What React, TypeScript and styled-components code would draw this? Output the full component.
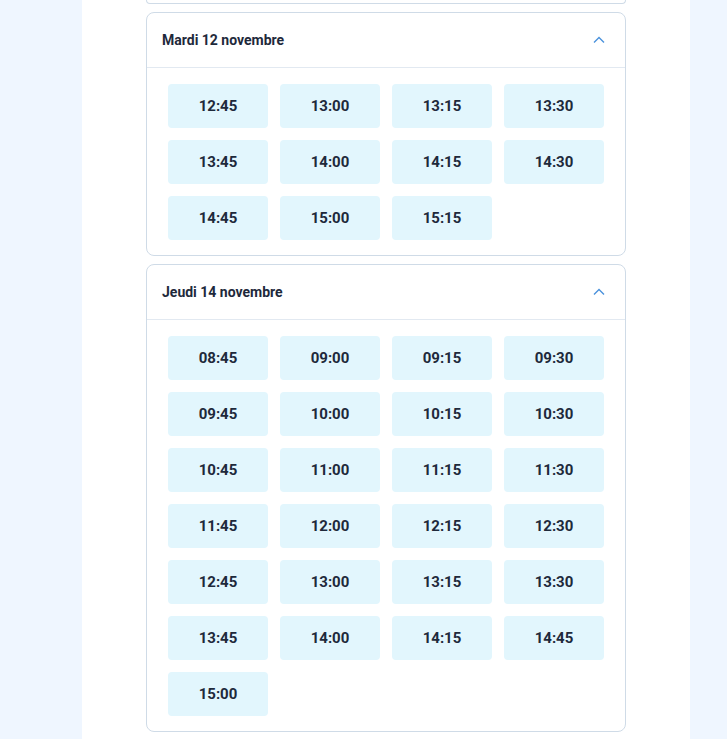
import React from "react";
import styled, { createGlobalStyle } from "styled-components";

const GlobalStyle = createGlobalStyle`
  html, body {
    margin: 0;
    padding: 0;
    background: #eff6ff;
    font-family: Roboto, "Liberation Sans", sans-serif;
  }
`;

type Day = { label: string; slots: string[] };

const days: Day[] = [
  {
    label: "Mardi 12 novembre",
    slots: ["12:45", "13:00", "13:15", "13:30", "13:45", "14:00", "14:15", "14:30", "14:45", "15:00", "15:15"],
  },
  {
    label: "Jeudi 14 novembre",
    slots: [
      "08:45", "09:00", "09:15", "09:30",
      "09:45", "10:00", "10:15", "10:30",
      "10:45", "11:00", "11:15", "11:30",
      "11:45", "12:00", "12:15", "12:30",
      "12:45", "13:00", "13:15", "13:30",
      "13:45", "14:00", "14:15", "14:45",
      "15:00",
    ],
  },
];

const Page = styled.div`
  width: 608px;
  min-height: 739px;
  margin-left: 82px;
  background: #ffffff;
  padding: 0 64px;
  box-sizing: border-box;
  display: flex;
  flex-direction: column;
  gap: 8px;
`;

const PrevCardEnd = styled.div`
  height: 4px;
  border: 1px solid #cfdbe7;
  border-top: none;
  border-radius: 0 0 8px 8px;
  box-sizing: border-box;
`;

const Card = styled.section`
  border: 1px solid #cfdbe7;
  border-radius: 8px;
  background: #fff;
`;

const Header = styled.div`
  height: 54px;
  padding: 0 16px 0 15px;
  display: flex;
  align-items: center;
  justify-content: space-between;
  border-bottom: 1px solid #e2e9f1;
`;

const Title = styled.h3`
  margin: 0;
  font-size: 14px;
  font-weight: 700;
  color: #1e293b;
`;

const Chevron = styled.svg`
  width: 14px;
  height: 14px;
  margin-right: 3px;
`;

const Slots = styled.div`
  padding: 16px 20px 15px;
  display: grid;
  grid-template-columns: repeat(4, 100px);
  gap: 12px;
  justify-content: center;
`;

const Slot = styled.button`
  height: 44px;
  border: none;
  border-radius: 4px;
  background: #e2f6fd;
  color: #1e293b;
  font-family: Roboto, "Liberation Sans", sans-serif;
  font-size: 15px;
  font-weight: 700;
  cursor: pointer;
`;

const DayCard = ({ day }: { day: Day }) => (
  <Card>
    <Header>
      <Title>{day.label}</Title>
      <Chevron viewBox="0 0 14 14">
        <polyline points="2,9.5 7,4.5 12,9.5" fill="none" stroke="#4a92dc" strokeWidth="1.4" />
      </Chevron>
    </Header>
    <Slots>
      {day.slots.map((s, i) => (
        <Slot key={i}>{s}</Slot>
      ))}
    </Slots>
  </Card>
);

export default function App() {
  return (
    <>
      <GlobalStyle />
      <Page>
        <PrevCardEnd />
        {days.map((d) => (
          <DayCard key={d.label} day={d} />
        ))}
      </Page>
    </>
  );
}
